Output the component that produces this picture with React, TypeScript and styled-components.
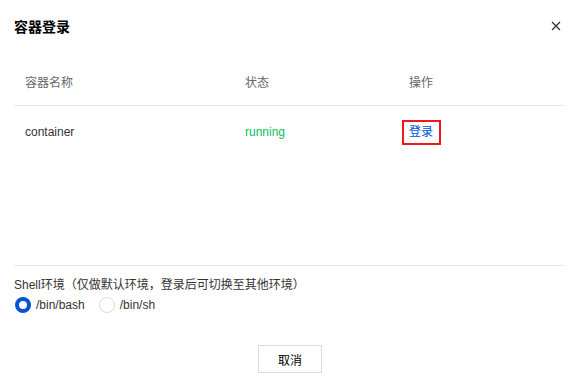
import React from "react";
import styled, { createGlobalStyle } from "styled-components";

const Global = createGlobalStyle`
  html, body { margin: 0; padding: 0; background: #fff; }
  body { font-family: "Liberation Sans", Arial, "Noto Sans CJK SC", sans-serif; font-size: 12px; color: rgba(0,0,0,0.9); }
  * { box-sizing: border-box; }
`;

const Dialog = styled.div`
  width: 577px;
  height: 383px;
  background: #fff;
  display: flex;
  flex-direction: column;
  padding: 0 12px 0 14px;
`;

const Header = styled.div`
  height: 58px;
  display: flex;
  align-items: center;
  justify-content: space-between;
  padding-bottom: 6px;
`;

const Title = styled.h3`
  margin: 0;
  font-size: 14px;
  font-weight: bold;
  color: #000;
`;

const Close = styled.button`
  border: 0;
  background: none;
  padding: 0;
  margin-right: 1px;
  width: 16px;
  height: 16px;
  display: flex;
  align-items: center;
  justify-content: center;
  cursor: pointer;
`;

const TableArea = styled.div`
  height: 208px;
  border-bottom: 1px solid #e7e7e7;
`;

const Row = styled.div<{ $head?: boolean }>`
  display: grid;
  grid-template-columns: 220px 164px 1fr;
  height: ${(p) => (p.$head ? "48px" : "52px")};
  align-items: center;
  border-bottom: ${(p) => (p.$head ? "1px solid #e7e7e7" : "none")};
  color: ${(p) => (p.$head ? "#666" : "#333")};
`;

const Cell = styled.div`
  padding-left: 11px;
  display: flex;
  align-items: center;
`;

const Status = styled.span`
  color: #0abf5b;
`;

const LoginLink = styled.a`
  color: #0052d9;
  text-decoration: none;
  border: 2px solid #f01818;
  padding: 2px 6px 2px 5px;
  margin-left: -7px;
  line-height: 17px;
  cursor: pointer;
`;

const ShellBlock = styled.div`
  padding-top: 11px;
  display: flex;
  flex-direction: column;
  gap: 4px;
`;

const Label = styled.div`
  color: #333;
  line-height: 16px;
`;

const RadioGroup = styled.div`
  display: flex;
  gap: 14px;
  align-items: center;
  margin-left: 1px;
`;

const RadioItem = styled.label`
  display: flex;
  align-items: center;
  gap: 5px;
  color: #333;
  line-height: 16px;
`;

const RadioDot = styled.span<{ $checked?: boolean }>`
  width: 16px;
  height: 16px;
  border-radius: 50%;
  border: ${(p) => (p.$checked ? "4px solid #0052d9" : "1px solid #dcdcdc")};
  background: #fff;
`;

const Footer = styled.div`
  display: flex;
  justify-content: center;
  padding-top: 32px;
`;

const Button = styled.button`
  width: 64px;
  height: 28px;
  margin-left: 1px;
  border: 1px solid #dcdcdc;
  background: #fff;
  font-family: inherit;
  font-size: 12px;
  color: #000;
  cursor: pointer;
`;

export default function App() {
  return (
    <>
      <Global />
      <Dialog>
        <Header>
          <Title>容器登录</Title>
          <Close aria-label="close">
            <svg width="10" height="10" viewBox="0 0 10 10">
              <path d="M1 1L9 9M9 1L1 9" stroke="#333" strokeWidth="1.3" />
            </svg>
          </Close>
        </Header>
        <TableArea>
          <Row $head>
            <Cell>容器名称</Cell>
            <Cell>状态</Cell>
            <Cell>操作</Cell>
          </Row>
          <Row>
            <Cell>container</Cell>
            <Cell>
              <Status>running</Status>
            </Cell>
            <Cell>
              <LoginLink>登录</LoginLink>
            </Cell>
          </Row>
        </TableArea>
        <ShellBlock>
          <Label>Shell环境（仅做默认环境，登录后可切换至其他环境）</Label>
          <RadioGroup>
            <RadioItem>
              <RadioDot $checked />
              /bin/bash
            </RadioItem>
            <RadioItem>
              <RadioDot />
              /bin/sh
            </RadioItem>
          </RadioGroup>
        </ShellBlock>
        <Footer>
          <Button>取消</Button>
        </Footer>
      </Dialog>
    </>
  );
}
